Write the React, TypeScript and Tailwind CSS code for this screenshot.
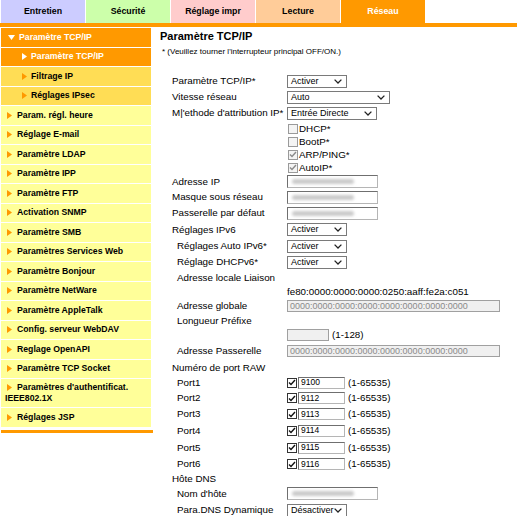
import React from "react";

type SideItem = { t: string; kind?: "open" | "subActive" | "sub" };

const tabs = [
  { t: "Entretien", bg: "bg-[#ccccff]", fg: "text-black" },
  { t: "Sécurité", bg: "bg-[#ccffaa]", fg: "text-black" },
  { t: "Réglage impr", bg: "bg-[#ffcccc]", fg: "text-black" },
  { t: "Lecture", bg: "bg-[#ffcc99]", fg: "text-black" },
  { t: "Réseau", bg: "bg-[#ff9900]", fg: "text-white" },
];

const sideItems: SideItem[] = [
  { t: "Paramètre TCP/IP", kind: "open" },
  { t: "Paramètre TCP/IP", kind: "subActive" },
  { t: "Filtrage IP", kind: "sub" },
  { t: "Réglages IPsec", kind: "sub" },
  { t: "Param. régl. heure" },
  { t: "Réglage E-mail" },
  { t: "Paramètre LDAP" },
  { t: "Paramètre IPP" },
  { t: "Paramètre FTP" },
  { t: "Activation SNMP" },
  { t: "Paramètre SMB" },
  { t: "Paramètres Services Web" },
  { t: "Paramètre Bonjour" },
  { t: "Paramètre NetWare" },
  { t: "Paramètre AppleTalk" },
  { t: "Config. serveur WebDAV" },
  { t: "Reglage OpenAPI" },
  { t: "Paramètre TCP Socket" },
];

const Arrow = ({ color }: { color: string }) => (
  <svg width="5" height="7" viewBox="0 0 5 7" className="shrink-0">
    <polygon points="0,0 5,3.5 0,7" fill={color} />
  </svg>
);

const DownArrow = () => (
  <svg width="7" height="5" viewBox="0 0 7 5" className="shrink-0">
    <polygon points="0,0 7,0 3.5,5" fill="#ffffff" />
  </svg>
);

const Chevron = () => (
  <svg width="8" height="5" viewBox="0 0 8 5">
    <polyline points="0.6,0.6 4,4 7.4,0.6" fill="none" stroke="#222" strokeWidth="1.3" />
  </svg>
);

function Select({ value, w }: { value: string; w: string }) {
  return (
    <div
      className={`flex h-[13px] items-center justify-between border border-[#7a7a7a] bg-white pl-[3px] pr-[4px] text-[9px] leading-none ${w}`}
    >
      <span>{value}</span>
      <Chevron />
    </div>
  );
}

function Blurred() {
  return (
    <div className="flex h-[13px] w-[91px] items-center border border-t-[#6f6f6f] border-l-[#6f6f6f] border-r-[#b5b5b5] border-b-[#b5b5b5] bg-white pl-[4px]">
      <div className="h-[5px] w-[62px] rounded-sm bg-[#c9c9c9] blur-[1.5px]" />
    </div>
  );
}

function Disabled({ w, value }: { w: string; value: string }) {
  return (
    <div
      className={`flex h-[12px] items-center border border-[#a0a0a0] bg-[#f0f0f0] pl-[2px] text-[9px] leading-none text-[#8a8a8a] ${w}`}
    >
      {value}
    </div>
  );
}

function Check({ checked, dim }: { checked: boolean; dim?: boolean }) {
  return (
    <span
      className={`flex h-[10px] w-[10px] shrink-0 items-center justify-center border ${
        dim ? "border-[#9a9a9a] bg-[#f4f4f4]" : "border-[#333] bg-white"
      }`}
    >
      {checked && (
        <svg width="8" height="7" viewBox="0 0 8 7">
          <polyline
            points="1,3.5 3,5.5 7,1"
            fill="none"
            stroke={dim ? "#8a8a8a" : "#111"}
            strokeWidth="1.4"
          />
        </svg>
      )}
    </span>
  );
}

function Row({
  h,
  label,
  indent,
  children,
}: {
  h: string;
  label?: string;
  indent?: boolean;
  children?: React.ReactNode;
}) {
  return (
    <div className={`flex items-center ${h}`}>
      <div className={`w-[115px] shrink-0 ${indent ? "pl-[5px]" : ""}`}>{label}</div>
      <div className="flex items-center">{children}</div>
    </div>
  );
}

function PortRow({ h, label, value }: { h: string; label: string; value: string }) {
  return (
    <Row h={h} label={label} indent>
      <Check checked />
      <div className="ml-px flex h-[12px] w-[47px] items-center border border-t-[#6f6f6f] border-l-[#6f6f6f] border-r-[#b5b5b5] border-b-[#b5b5b5] bg-white pl-[2px] text-[8.5px] leading-none">
        {value}
      </div>
      <span className="ml-[3px]">(1-65535)</span>
    </Row>
  );
}

function Sidebar() {
  return (
    <div className="w-[152px] shrink-0 pt-px">
      <div className="flex w-[150px] flex-col gap-px text-[8.7px] font-bold leading-[11px]">
        {sideItems.map((it, i) => {
          if (it.kind === "open")
            return (
              <div key={i} className="flex h-[18.5px] items-center gap-[4px] bg-[#ff9900] pl-[7px] text-white">
                <DownArrow />
                <span>{it.t}</span>
              </div>
            );
          if (it.kind === "subActive")
            return (
              <div key={i} className="flex h-[18.5px] items-center gap-[4px] bg-[#ff9900] pl-[21px] text-white">
                <Arrow color="#ffffff" />
                <span>{it.t}</span>
              </div>
            );
          if (it.kind === "sub")
            return (
              <div key={i} className="flex h-[18.5px] items-center gap-[4px] bg-[#ffdd55] pl-[21px] text-black">
                <Arrow color="#ff9900" />
                <span>{it.t}</span>
              </div>
            );
          return (
            <div key={i} className="flex h-[18.5px] items-center gap-[5px] bg-[#ffff99] pl-[6px] text-black">
              <Arrow color="#ff9900" />
              <span>{it.t}</span>
            </div>
          );
        })}
        <div className="flex h-[28px] flex-col justify-center bg-[#ffff99] pl-[4px] text-black">
          <div className="flex items-center gap-[5px] pl-[2px]">
            <Arrow color="#ff9900" />
            <span>Paramètres d'authentificat.</span>
          </div>
          <div>IEEE802.1X</div>
        </div>
        <div className="flex h-[18.5px] items-center gap-[5px] bg-[#ffff99] pl-[6px] text-black">
          <Arrow color="#ff9900" />
          <span>Réglages JSP</span>
        </div>
      </div>
      <div className="mt-[3px] h-[3px] w-[152px] bg-[#ff9900]" />
    </div>
  );
}

export default function App() {
  return (
    <div className="min-h-screen w-[517px] bg-white font-['Liberation_Sans',Arial,sans-serif] text-black">
      <div className="flex gap-px pl-px">
        {tabs.map((t) => (
          <div
            key={t.t}
            className={`flex h-[23px] w-[84px] items-center justify-center text-[8.8px] font-bold ${t.bg} ${t.fg}`}
          >
            {t.t}
          </div>
        ))}
      </div>
      <div className="h-[4px] w-full bg-[#ff9900]" />

      <div className="flex pl-px">
        <Sidebar />

        <main className="ml-[7px] flex-1 pt-[2px]">
          <h1 className="text-[11px] font-bold leading-[14px]">Paramètre TCP/IP</h1>
          <p className="mt-[4px] pl-[2px] text-[8px] leading-[10px]">
            * (Veuillez tourner l'interrupteur principal OFF/ON.)
          </p>

          <div className="mt-[16px] pl-[12px] text-[9.8px] leading-none">
            <Row h="h-[16px]" label="Paramètre TCP/IP*">
              <Select value="Activer" w="w-[60px]" />
            </Row>
            <Row h="h-[16px]" label="Vitesse réseau">
              <Select value="Auto" w="w-[103px]" />
            </Row>
            <Row h="h-[16px]" label="M|'ethode d'attribution IP*">
              <Select value="Entrée Directe" w="w-[90px]" />
            </Row>
            <div className="flex pt-[1px]">
              <div className="w-[115px] shrink-0" />
              <div className="flex flex-col pl-px">
                {[
                  ["DHCP*", false],
                  ["BootP*", false],
                  ["ARP/PING*", true],
                  ["AutoIP*", true],
                ].map(([l, c]) => (
                  <div key={l as string} className="flex h-[13px] items-center gap-[1px]">
                    <Check checked={c as boolean} dim />
                    <span>{l as string}</span>
                  </div>
                ))}
              </div>
            </div>
            <Row h="h-[15px]" label="Adresse IP">
              <Blurred />
            </Row>
            <Row h="h-[16px]" label="Masque sous réseau">
              <Blurred />
            </Row>
            <Row h="h-[16px]" label="Passerelle par défaut">
              <Blurred />
            </Row>
            <Row h="h-[17px]" label="Réglages IPv6">
              <Select value="Activer" w="w-[60px]" />
            </Row>
            <Row h="h-[16px]" label="Réglages Auto IPv6*" indent>
              <Select value="Activer" w="w-[60px]" />
            </Row>
            <Row h="h-[16px]" label="Réglage DHCPv6*" indent>
              <Select value="Activer" w="w-[60px]" />
            </Row>
            <Row h="h-[15px]" label="Adresse locale Liaison" indent />
            <Row h="h-[13px]">
              <span>fe80:0000:0000:0000:0250:aaff:fe2a:c051</span>
            </Row>
            <Row h="h-[16px]" label="Adresse globale" indent>
              <Disabled w="w-[213px]" value="0000:0000:0000:0000:0000:0000:0000:0000" />
            </Row>
            <Row h="h-[14px]" label="Longueur Préfixe" indent />
            <Row h="h-[14px]">
              <Disabled w="w-[42px]" value="" />
              <span className="ml-[3px]">(1-128)</span>
            </Row>
            <Row h="h-[18px]" label="Adresse Passerelle" indent>
              <Disabled w="w-[213px]" value="0000:0000:0000:0000:0000:0000:0000:0000" />
            </Row>
            <Row h="h-[15px]" label="Numéro de port RAW" />
            <PortRow h="h-[15px]" label="Port1" value="9100" />
            <PortRow h="h-[16px]" label="Port2" value="9112" />
            <PortRow h="h-[16px]" label="Port3" value="9113" />
            <PortRow h="h-[17px]" label="Port4" value="9114" />
            <PortRow h="h-[17px]" label="Port5" value="9115" />
            <PortRow h="h-[16px]" label="Port6" value="9116" />
            <Row h="h-[13px]" label="Hôte DNS" />
            <Row h="h-[17px]" label="Nom d'hôte" indent>
              <Blurred />
            </Row>
            <Row h="h-[16px]" label="Para.DNS Dynamique" indent>
              <Select value="Désactiver" w="w-[60px]" />
            </Row>
          </div>
        </main>
      </div>
    </div>
  );
}
